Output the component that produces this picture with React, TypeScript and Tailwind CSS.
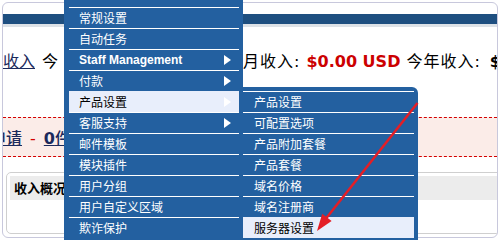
import clsx from 'clsx'

type MenuItem = { label: string; arrow?: boolean; active?: boolean; latin?: boolean }

const mainItems: MenuItem[] = [
  { label: '' },
  { label: '常规设置' },
  { label: '自动任务' },
  { label: 'Staff Management', arrow: true, latin: true },
  { label: '付款', arrow: true },
  { label: '产品设置', arrow: true, active: true },
  { label: '客服支持', arrow: true },
  { label: '邮件模板' },
  { label: '模块插件' },
  { label: '用户分组' },
  { label: '用户自定义区域' },
  { label: '欺诈保护' },
]

const subItems: MenuItem[] = [
  { label: '产品设置' },
  { label: '可配置选项' },
  { label: '产品附加套餐' },
  { label: '产品套餐' },
  { label: '域名价格' },
  { label: '域名注册商' },
  { label: '服务器设置', active: true },
]

function Row({ item, indent }: { item: MenuItem; indent: string }) {
  return (
    <div
      className={clsx(
        'flex h-[21px] items-center border-t leading-[20px]',
        indent,
        item.active ? 'border-t-[#e8eefb] bg-[#e8eefb] text-black' : 'border-t-white text-white',
      )}
    >
      <span
        className={clsx(
          'whitespace-nowrap',
          item.latin ? "font-['Liberation_Sans',sans-serif] text-[12px] font-bold" : 'text-[12px]',
        )}
      >
        {item.label}
      </span>
      {item.arrow && (
        <span className="ml-auto mr-[8px] h-0 w-0 border-y-[5px] border-l-[7px] border-y-transparent border-l-white" />
      )}
    </div>
  )
}

export default function App() {
  return (
    <div className="relative h-[240px] w-[500px] overflow-hidden bg-white font-['DejaVu_Sans','Noto_Sans_CJK_SC',sans-serif]">
      {/* page behind the menus */}
      <div className="ml-[2px] mt-[2px] h-[236px] w-[496px] overflow-hidden rounded-[6px] border border-[#c8c8dc] bg-white">
        <div className="h-[11px]" />
        <div className="h-[10px] bg-[#1e4f80]" />
        <div className="h-[3px] bg-[#dde2e7]" />

        <div className="mt-[25px] flex h-[20px] items-center whitespace-nowrap text-[16px] leading-[20px] text-black">
          <a className="shrink-0 text-[#1b2a5c] underline">收入</a>
          <span className="ml-[7px] shrink-0">今</span>
          <span className="ml-[8px] inline-block w-[177px] shrink-0 overflow-hidden">
            日收入: <b className="text-[#cc0000]">$0.00 USD</b> 本
          </span>
          <span className="shrink-0 tracking-[1px]">月收入:</span>
          <b className="ml-[6px] shrink-0 text-[#cc0000]">$0.00 USD</b>
          <span className="ml-[6px] shrink-0 tracking-[1px]">今年收入:</span>
          <b className="ml-[9px] shrink-0">$0.00 USD</b>
        </div>

        <div className="mt-[45px] flex h-[40px] items-center whitespace-nowrap border-y border-dashed border-[#d40000] bg-[#fbece8] pt-[3px] text-[16px] leading-[20px]">
          <a className="-ml-[13px] shrink-0 font-medium text-[#1b2a5c] underline">申请</a>
          <span className="mx-[8px] shrink-0 text-[#d40000]">-</span>
          <a className="shrink-0 font-medium text-[#1b2a5c] underline">
            <b>0</b>件
          </a>
        </div>

        <div className="ml-[3px] mt-[15px] h-[62px] w-[520px] rounded-l-[5px] border border-[#cfcfcf] p-[3px]">
          <div className="flex h-[24px] items-center bg-[#ececec] pl-[4px] font-['Noto_Sans_CJK_SC',sans-serif] text-[13px] font-bold text-black">
            收入概况
          </div>
        </div>
      </div>

      {/* main dropdown */}
      <div className="absolute left-[64px] top-[-14px] h-[260px] w-[179px] bg-[#2360a0] pl-[5px] pr-[4px] font-['Noto_Sans_CJK_SC',sans-serif]">
        {mainItems.map((item, i) => (
          <Row key={i} item={item} indent="pl-[10px]" />
        ))}
      </div>

      {/* submenu */}
      <div className="absolute left-[243px] top-[87px] h-[160px] w-[175px] rounded-tr-[6px] bg-[#2360a0] pr-[4px] pt-[4px] font-['Noto_Sans_CJK_SC',sans-serif]">
        {subItems.map((item, i) => (
          <Row key={i} item={item} indent="pl-[11px]" />
        ))}
      </div>

      {/* red pointer */}
      <svg className="pointer-events-none absolute left-0 top-0" width="500" height="240">
        <line x1="417.5" y1="103" x2="326" y2="218.5" stroke="#e41e26" strokeWidth="2.5" />
        <polygon points="317,231 331.6,221.1 322.2,213.7" fill="#e41e26" />
      </svg>
    </div>
  )
}
